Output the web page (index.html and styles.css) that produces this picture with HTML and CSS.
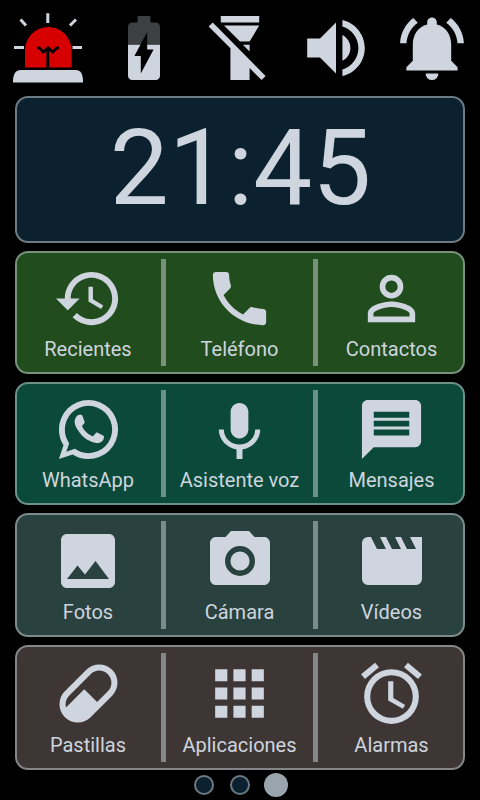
FILE: index.html
```html
<!DOCTYPE html>
<html lang="es">
<head>
<meta charset="utf-8">
<title>Inicio</title>
<link rel="stylesheet" href="styles.css">
</head>
<body>
<header class="status">
  <svg class="status-icon" viewBox="0 0 96 96">
    <path d="M13 82.500V80C13.500 74 15.500 70 21 70H75.500C81 70 82.500 74 83 80V82.500Z"/>
    <path class="dome" d="M25 67.600V50.300A23.300 23.300 0 0 1 71.600 50.300V67.600Z"/>
    <path class="filament" d="M37 47.800L39.200 47.800L43.300 52L48 47.800L52.800 52L57 47.800L59 47.800M47.800 48V68"/>
    <path class="rays" d="M47.800 13.200V23M20.500 19.500L26 25.500M76 19.500L70 25.500M14 47.400H24M72.500 47.400H82"/>
  </svg>
  <svg class="status-icon" viewBox="-3 -3 30 30">
    <path class="spent" d="M7 11V5.330C7 4.600 7.600 4 8.330 4H10V2H14V4H15.670C16.400 4 17 4.600 17 5.330V11Z"/>
    <path d="M7 11V20.670C7 21.400 7.600 22 8.330 22H15.670C16.400 22 17 21.400 17 20.670V11Z"/>
    <path class="bolt" d="M11 20V14.500H9L13 7V12.500H15Z"/>
  </svg>
  <svg class="status-icon" viewBox="-3 -3 30 30">
    <path d="M6 2H18V4H6ZM7 5H18L15 10H12ZM12.900 11H15V13.100ZM2.200 5.270L3.480 4L20 20.720L18.730 22L15 18.270V22H9V12.070Z"/>
  </svg>
  <svg class="status-icon" viewBox="-3 -3 30 30">
    <path d="M3 9v6h4l5 5V4L7 9H3zm13.500 3c0-1.770-1.020-3.290-2.500-4.030v8.050c1.480-.73 2.500-2.250 2.500-4.020zM14 3.230v2.060c2.890.86 5 3.540 5 6.710s-2.110 5.850-5 6.710v2.060c4.010-.91 7-4.490 7-8.770s-2.990-7.860-7-8.770z"/>
  </svg>
  <svg class="status-icon" viewBox="-3 -3 30 30">
    <path d="M7.580 4.080L6.150 2.650C3.750 4.480 2.170 7.300 2.030 10.500h2c.15-2.650 1.510-4.970 3.550-6.420zM19.970 10.500h2c-.15-3.200-1.730-6.020-4.120-7.850l-1.420 1.430c2.020 1.450 3.390 3.770 3.540 6.420zM18 11c0-3.070-1.640-5.640-4.500-6.320V4c0-.83-.67-1.500-1.500-1.500s-1.500.67-1.500 1.500v.68C7.630 5.360 6 7.920 6 11v5l-2 2v1h16v-1l-2-2v-5zM10 20A2 2 0 0 0 14 20Z"/>
  </svg>
</header>

<main class="panels">
  <section class="card clock"><time>21:45</time></section>

  <section class="card row calls">
    <div class="app">
      <svg viewBox="0 0 24 24"><path d="M13 3c-4.970 0-9 4.030-9 9H1l3.890 3.890.07.14L9 12H6c0-3.870 3.130-7 7-7s7 3.130 7 7-3.130 7-7 7c-1.930 0-3.680-.79-4.940-2.060l-1.420 1.420C8.270 19.990 10.510 21 13 21c4.970 0 9-4.030 9-9s-4.030-9-9-9zm-1 5v5l4.280 2.540.72-1.210-3.500-2.080V8H12z"/></svg>
      <span>Recientes</span>
    </div>
    <i class="divider"></i>
    <div class="app">
      <svg viewBox="0 0 24 24"><path d="M6.620 10.790c1.440 2.830 3.760 5.140 6.590 6.590l2.200-2.200c.27-.27.67-.36 1.020-.24 1.120.37 2.330.57 3.570.57.55 0 1 .45 1 1V20c0 .55-.45 1-1 1-9.390 0-17-7.610-17-17 0-.55.45-1 1-1h3.500c.55 0 1 .45 1 1 0 1.250.2 2.450.57 3.570.11.35.03.74-.25 1.020l-2.200 2.200z"/></svg>
      <span>Teléfono</span>
    </div>
    <i class="divider"></i>
    <div class="app">
      <svg viewBox="0 0 24 24"><path d="M12 13C14.670 13 20 14.330 20 17V20H4V17C4 14.330 9.330 13 12 13M12 4A4 4 0 0 1 16 8A4 4 0 0 1 12 12A4 4 0 0 1 8 8A4 4 0 0 1 12 4M12 14.900C9.030 14.900 5.900 16.360 5.900 17V18.100H18.100V17C18.100 16.360 14.970 14.900 12 14.900M12 5.900A2.100 2.100 0 0 0 9.900 8A2.100 2.100 0 0 0 12 10.100A2.100 2.100 0 0 0 14.100 8A2.100 2.100 0 0 0 12 5.900Z"/></svg>
      <span>Contactos</span>
    </div>
  </section>

  <section class="card row talk">
    <div class="app">
      <svg viewBox="0 0 24 24"><path d="M16.750 13.960C17 14.090 17.160 14.160 17.210 14.260C17.270 14.370 17.250 14.870 17 15.440C16.800 16 15.760 16.540 15.300 16.560C14.840 16.580 14.830 16.920 12.340 15.830C9.850 14.740 8.350 12.080 8.230 11.910C8.110 11.740 7.270 10.530 7.310 9.300C7.360 8.080 8 7.500 8.260 7.260C8.500 7 8.770 6.970 8.940 7H9.410C9.560 7 9.770 6.940 9.960 7.450L10.650 9.320C10.710 9.450 10.750 9.600 10.660 9.760L10.390 10.170L10 10.590C9.880 10.710 9.740 10.840 9.880 11.090C10 11.350 10.500 12.180 11.200 12.870C12.110 13.750 12.910 14.040 13.150 14.170C13.390 14.310 13.540 14.290 13.690 14.130L14.500 13.190C14.690 12.940 14.850 13 15.080 13.080L16.750 13.960M12 2A10 10 0 0 1 22 12A10 10 0 0 1 12 22C10.030 22 8.200 21.430 6.650 20.450L2 22L3.550 17.350C2.570 15.800 2 13.970 2 12A10 10 0 0 1 12 2M12 4A8 8 0 0 0 4 12C4 13.720 4.540 15.310 5.460 16.610L4.500 19.500L7.390 18.540C8.690 19.460 10.280 20 12 20A8 8 0 0 0 20 12A8 8 0 0 0 12 4Z"/></svg>
      <span>WhatsApp</span>
    </div>
    <i class="divider"></i>
    <div class="app">
      <svg viewBox="0 0 24 24"><path d="M12 15c1.660 0 2.990-1.340 2.990-3L15 6c0-1.660-1.340-3-3-3S9 4.340 9 6v6c0 1.660 1.340 3 3 3zm5.300-3c0 3-2.540 5.100-5.300 5.100S6.700 15 6.700 12H5c0 3.420 2.720 6.230 6 6.720V22h2v-3.280c3.280-.48 6-3.300 6-6.720h-1.700z"/></svg>
      <span>Asistente voz</span>
    </div>
    <i class="divider"></i>
    <div class="app">
      <svg viewBox="0 0 24 24"><path d="M20 2H4c-1.100 0-1.990.9-1.990 2L2 22l4-4h14c1.100 0 2-.9 2-2V4c0-1.100-.9-2-2-2zM6 6H18V8H6ZM6 9H18V11H6ZM6 12H18V14H6Z"/></svg>
      <span>Mensajes</span>
    </div>
  </section>

  <section class="card row media">
    <div class="app">
      <svg viewBox="0 0 24 24"><path d="M21 19V5c0-1.100-.9-2-2-2H5c-1.100 0-2 .9-2 2v14c0 1.100.9 2 2 2h14c1.100 0 2-.9 2-2zM8.500 13.500l2.500 3.010L14.500 12l4.500 6H5l3.500-4.500z"/></svg>
      <span>Fotos</span>
    </div>
    <i class="divider"></i>
    <div class="app">
      <svg viewBox="0 0 24 24"><path d="M9 2L7.170 4H4c-1.100 0-2 .9-2 2v12c0 1.100.9 2 2 2h16c1.100 0 2-.9 2-2V6c0-1.100-.9-2-2-2h-3.170L15 2H9zM12 17A5 5 0 0 1 12 7A5 5 0 0 1 12 17ZM12 15.200A3.200 3.200 0 0 0 12 8.800A3.200 3.200 0 0 0 12 15.200Z"/></svg>
      <span>Cámara</span>
    </div>
    <i class="divider"></i>
    <div class="app">
      <svg viewBox="0 0 24 24"><path d="M18 4L20 8H17L15 4H13L15 8H12L10 4H8L10 8H7L5 4H4A2 2 0 0 0 2 6V18A2 2 0 0 0 4 20H20A2 2 0 0 0 22 18V4H18Z"/></svg>
      <span>Vídeos</span>
    </div>
  </section>

  <section class="card row tools">
    <div class="app">
      <svg viewBox="0 0 24 24"><path d="M4.220 11.290L11.290 4.220C13.640 1.880 17.430 1.880 19.780 4.220C22.120 6.560 22.120 10.360 19.780 12.710L12.710 19.780C10.360 22.120 6.560 22.120 4.220 19.780C1.880 17.430 1.880 13.640 4.220 11.290M5.640 12.710C4.590 13.750 4.240 15.240 4.600 16.570L10.590 10.590L14.830 14.830L18.360 11.290C19.930 9.730 19.930 7.200 18.360 5.640C16.800 4.070 14.270 4.070 12.710 5.640L5.640 12.710Z"/></svg>
      <span>Pastillas</span>
    </div>
    <i class="divider"></i>
    <div class="app">
      <svg viewBox="0 0 24 24"><path d="M4 4h4v4H4zM10 4h4v4h-4zM16 4h4v4h-4zM4 10h4v4H4zM10 10h4v4h-4zM16 10h4v4h-4zM4 16h4v4H4zM10 16h4v4h-4zM16 16h4v4h-4z"/></svg>
      <span>Aplicaciones</span>
    </div>
    <i class="divider"></i>
    <div class="app">
      <svg viewBox="0 0 24 24"><path d="M12 20A7 7 0 0 1 5 13A7 7 0 0 1 12 6A7 7 0 0 1 19 13A7 7 0 0 1 12 20M12 4A9 9 0 0 0 3 13A9 9 0 0 0 12 22A9 9 0 0 0 21 13A9 9 0 0 0 12 4M12.600 8H10.900V14.300L15.750 17.050L16.500 15.820L12.600 13.450V8M7.880 3.390L6.600 1.860L2 5.710L3.290 7.240L7.880 3.390M22 5.720L17.400 1.860L16.110 3.390L20.710 7.250L22 5.720Z"/></svg>
      <span>Alarmas</span>
    </div>
  </section>
</main>

<nav class="pager">
  <i class="dot"></i>
  <i class="dot"></i>
  <i class="dot active"></i>
</nav>
</body>
</html>
```
FILE: styles.css
```css
* {
  box-sizing: border-box;
}

body {
  --ink: #ced5de;
  --line: rgba(206, 213, 218, 0.5);
  margin: 0;
  width: 480px;
  height: 800px;
  overflow: hidden;
  background: #000;
  color: var(--ink);
  font-family: Roboto, sans-serif;
}

svg {
  display: block;
  fill: var(--ink);
  fill-rule: evenodd;
}

.status {
  display: grid;
  grid-template-columns: repeat(5, 96px);
  height: 96px;
}

.status-icon {
  width: 96px;
  height: 96px;
}

.dome {
  fill: #d60000;
}

.filament {
  fill: none;
  stroke: #000;
  stroke-width: 2.8;
}

.rays {
  fill: none;
  stroke: var(--ink);
  stroke-width: 3;
}

.spent {
  fill: #3e3f40;
}

.bolt {
  fill: #000;
}

.panels {
  display: grid;
  grid-template-rows: 147px 123px 123px 124px 125px;
  row-gap: 8px;
  padding: 0 15px;
}

.card {
  border: 2px solid var(--line);
  border-radius: 13px;
}

.clock {
  display: flex;
  align-items: center;
  justify-content: center;
  padding: 0 0 2px 1px;
  background: #0c212f;
  font-size: 105px;
  line-height: 124px;
}

.row {
  display: grid;
  grid-template-columns: 142px 5px 143px 5px 143px;
  column-gap: 2px;
}

.app {
  display: flex;
  flex-direction: column;
  align-items: center;
  padding-top: 10px;
  font-size: 20px;
  line-height: 24px;
  white-space: nowrap;
}

.app svg {
  width: 71px;
  height: 71px;
  margin-bottom: 3px;
}

.media .app svg {
  width: 72px;
  height: 72px;
}

.tools .app svg {
  width: 73px;
  height: 73px;
}

.divider {
  margin: 6px 0;
  background: var(--line);
}

.calls {
  background: #214c1e;
}

.talk {
  background: #0b4a3a;
}

.media {
  background: #2a423f;
}

.tools {
  background: #3d3634;
}

.pager {
  display: grid;
  grid-template-columns: repeat(3, 36px);
  justify-content: center;
  place-items: center;
  height: 30px;
}

.dot {
  width: 20px;
  height: 20px;
  border: 2px solid var(--line);
  border-radius: 50%;
  background: #0c212f;
}

.dot.active {
  width: 24px;
  height: 24px;
  border: 0;
  background: #99a4ac;
}
```
